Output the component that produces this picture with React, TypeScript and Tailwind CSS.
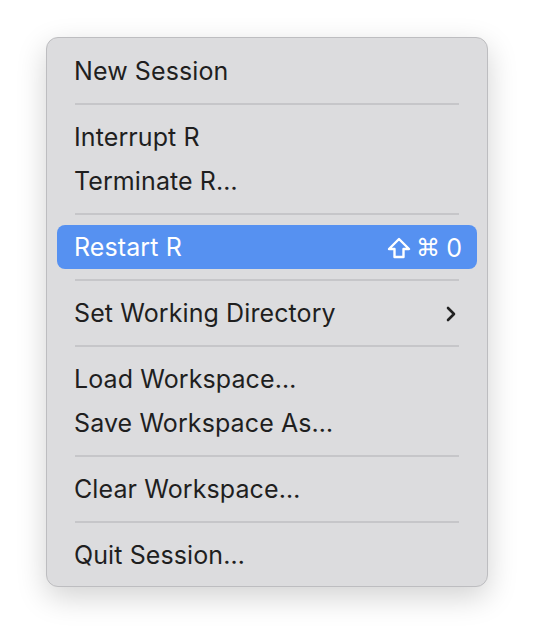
import React from "react";

type Item =
  | { kind: "sep" }
  | { kind: "item"; label: string; active?: boolean; submenu?: boolean; shortcut?: boolean };

const items: Item[] = [
  { kind: "item", label: "New Session" },
  { kind: "sep" },
  { kind: "item", label: "Interrupt R" },
  { kind: "item", label: "Terminate R…" },
  { kind: "sep" },
  { kind: "item", label: "Restart R", active: true, shortcut: true },
  { kind: "sep" },
  { kind: "item", label: "Set Working Directory", submenu: true },
  { kind: "sep" },
  { kind: "item", label: "Load Workspace…" },
  { kind: "item", label: "Save Workspace As…" },
  { kind: "sep" },
  { kind: "item", label: "Clear Workspace…" },
  { kind: "sep" },
  { kind: "item", label: "Quit Session…" },
];

function ShiftIcon() {
  return (
    <svg width="24" height="22" viewBox="0 0 24 22" fill="none">
      <path
        d="M12 2 L22 12 H16.5 V20 H7.5 V12 H2 Z"
        stroke="white"
        strokeWidth="2.4"
        strokeLinejoin="round"
      />
    </svg>
  );
}

function Chevron() {
  return (
    <svg width="12" height="16" viewBox="0 0 12 16" fill="none">
      <path
        d="M3 2 L9 8 L3 14"
        stroke="#222"
        strokeWidth="2.6"
        strokeLinecap="round"
        strokeLinejoin="round"
      />
    </svg>
  );
}

export default function App() {
  return (
    <div className="w-[534px] h-[640px] bg-white pt-[37px] pl-[46px]">
      <div
        className="w-[442px] rounded-[12px] border border-[#bdbdc0] bg-[#dcdcde] pt-[11px] pb-[9px] px-[10px] shadow-[0_10px_30px_rgba(0,0,0,0.18)]"
        style={{ fontFamily: "Inter, 'Noto Sans', sans-serif" }}
      >
        {items.map((it, i) =>
          it.kind === "sep" ? (
            <div key={i} className="h-[22px] flex items-center px-[18px]">
              <div className="h-[2px] w-full bg-[#c6c6c9]" />
            </div>
          ) : (
            <div
              key={i}
              className={`h-[44px] flex items-center justify-between pl-[17px] pr-[15px] pt-[2px] rounded-[8px] text-[25px] tracking-[0.1px] ${
                it.active ? "bg-[#5691f1] text-white" : "text-[#1f1f1f]"
              }`}
            >
              <span>{it.label}</span>
              {it.shortcut && (
                <span className="flex items-center gap-[5px]">
                  <span className="pl-[3px] flex items-center">
                    <ShiftIcon />
                  </span>
                  <span className="text-[24px] leading-none" style={{ fontFamily: "'DejaVu Sans', sans-serif" }}>
                    ⌘
                  </span>
                  <span className="text-[25px] leading-none pl-[1px]">0</span>
                </span>
              )}
              {it.submenu && (
                <span className="pr-[5px] flex items-center">
                  <Chevron />
                </span>
              )}
            </div>
          )
        )}
      </div>
    </div>
  );
}
